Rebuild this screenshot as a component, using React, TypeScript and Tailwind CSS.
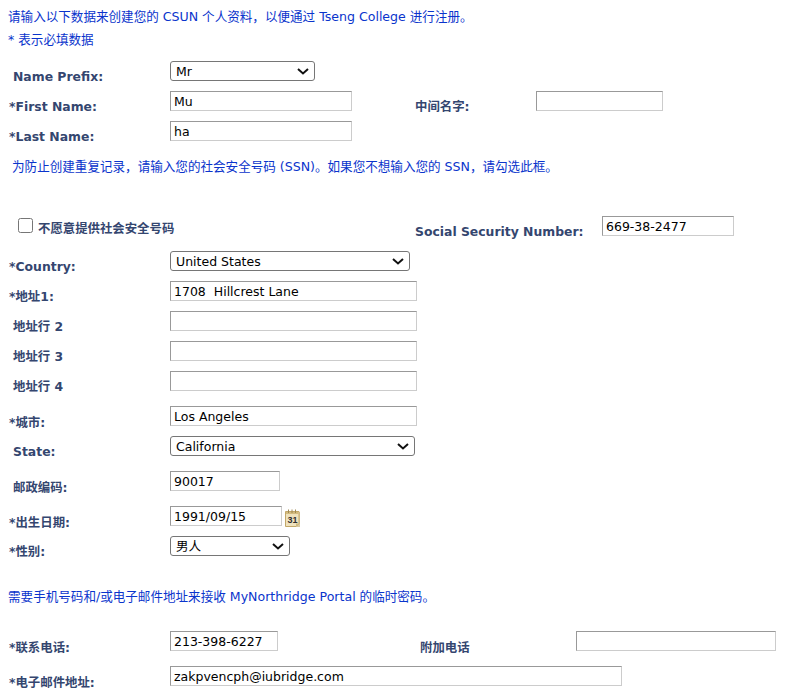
import React from 'react';

const inputCls =
  'h-[20px] shrink-0 border border-t-[#999] border-l-[#999] border-r-[#ccc] border-b-[#ccc] bg-white px-[3px] text-[12.5px] text-black outline-none';
const labelCls = 'shrink-0 font-bold text-[12.4px] leading-[16px] text-[#34466f]';
const noteCls = 'text-[12.57px] leading-[16px] text-[#0a34cc]';

// label column is 170px wide; required fields start a bit further left
const Label = ({ text, req, low }: { text: string; req?: boolean; low?: boolean }) => (
  <div className={`${labelCls} w-[170px] ${req ? 'pl-[9px]' : 'pl-[13px]'} ${low ? 'pt-[9px]' : 'pt-[8px]'}`}>
    {req ? '*' : ''}
    {text}
  </div>
);

const Select = ({ value, className }: { value: string; className: string }) => (
  <div className={`relative h-[20px] shrink-0 ${className}`}>
    <select
      className="block h-[20px] w-full appearance-none rounded-[3px] border border-[#767676] bg-white pl-[5px] pt-[1px] text-[12.5px] text-black"
      defaultValue={value}
    >
      <option>{value}</option>
    </select>
    <svg
      width="12"
      height="7"
      viewBox="0 0 12 7"
      className="pointer-events-none absolute right-[6px] top-[7px]"
    >
      <path d="M1 1l5 4.500 5-4.500" fill="none" stroke="#111" strokeWidth="2" />
    </svg>
  </div>
);

const CalendarIcon = () => (
  <svg width="17" height="19" viewBox="0 0 17 19" className="ml-[2px] mt-[3px] shrink-0">
    <path d="M2.500 3h13.500v15h-13.500z" fill="#d8c9a0" />
    <path d="M1.500 2.500h13.500v12l-3 3h-10.500z" fill="#efe2bd" stroke="#c2a768" />
    <path d="M2 3h12.500v2h-12.500z" fill="#d2ba7e" />
    <path d="M4.500 0.500v3.500M8 0.500v3.500M11.500 0.500v3.500" stroke="#a08a55" />
    <text x="3.500" y="14" fontSize="9" fontWeight="700" fill="#2f2f2f" fontFamily="'Liberation Sans',sans-serif">
      31
    </text>
    <path d="M12 17.500v-3h3z" fill="#d2ba7e" />
  </svg>
);

export default function App() {
  return (
    <form className="h-[694px] w-[785px] overflow-hidden bg-white font-['DejaVu_Sans','Noto_Sans_CJK_SC',sans-serif]">
      <p className={`${noteCls} pl-[8px] pt-[9px]`}>请输入以下数据来创建您的 CSUN 个人资料，以便通过 Tseng College 进行注册。</p>
      <p className={`${noteCls} pl-[8px] pt-[7px]`}>* 表示必填数据</p>

      <div className="mt-[13px] flex h-[20px]">
        <Label text="Name Prefix:" />
        <Select value="Mr" className="w-[145px]" />
      </div>

      <div className="mt-[10px] flex h-[20px]">
        <Label text="First Name:" req />
        <input className={`${inputCls} w-[182px]`} defaultValue="Mu" />
        <div className={`${labelCls} w-[184px] pl-[63px] pt-[8px]`}>中间名字:</div>
        <input className={`${inputCls} w-[127px]`} />
      </div>

      <div className="mt-[10px] flex h-[20px]">
        <Label text="Last Name:" req />
        <input className={`${inputCls} w-[182px]`} defaultValue="ha" />
      </div>

      <p className={`${noteCls} pl-[12px] pt-[18px]`}>为防止创建重复记录，请输入您的社会安全号码 (SSN)。如果您不想输入您的 SSN，请勾选此框。</p>

      <div className="mt-[41px] flex h-[20px]">
        <label className={`${labelCls} flex w-[415px] shrink-0 items-start pl-[18px] pt-[2px]`}>
          <input type="checkbox" className="mr-[5px] h-[15px] w-[15px]" />
          <span className="pt-[3px]">不愿意提供社会安全号码</span>
        </label>
        <div className={`${labelCls} w-[187px] pt-[8px]`}>Social Security Number:</div>
        <input className={`${inputCls} w-[132px]`} defaultValue="669-38-2477" />
      </div>

      <div className="mt-[15px] flex h-[20px]">
        <Label text="Country:" req />
        <Select value="United States" className="w-[240px]" />
      </div>

      <div className="mt-[10px] flex h-[20px]">
        <Label text="地址1:" req />
        <input className={`${inputCls} w-[247px]`} defaultValue="1708  Hillcrest Lane" />
      </div>
      <div className="mt-[10px] flex h-[20px]">
        <Label text="地址行 2" />
        <input className={`${inputCls} w-[247px]`} />
      </div>
      <div className="mt-[10px] flex h-[20px]">
        <Label text="地址行 3" />
        <input className={`${inputCls} w-[247px]`} />
      </div>
      <div className="mt-[10px] flex h-[20px]">
        <Label text="地址行 4" />
        <input className={`${inputCls} w-[247px]`} />
      </div>

      <div className="mt-[15px] flex h-[20px]">
        <Label text="城市:" req low />
        <input className={`${inputCls} w-[247px]`} defaultValue="Los Angeles" />
      </div>
      <div className="mt-[10px] flex h-[20px]">
        <Label text="State:" />
        <Select value="California" className="w-[245px]" />
      </div>
      <div className="mt-[15px] flex h-[20px]">
        <Label text="邮政编码:" low />
        <input className={`${inputCls} w-[110px]`} defaultValue="90017" />
      </div>
      <div className="mt-[15px] flex h-[20px]">
        <Label text="出生日期:" req low />
        <input className={`${inputCls} w-[112px]`} defaultValue="1991/09/15" />
        <CalendarIcon />
      </div>
      <div className="mt-[10px] flex h-[20px]">
        <Label text="性别:" req />
        <Select value="男人" className="w-[120px]" />
      </div>

      <p className={`${noteCls} pl-[8px] pt-[33px]`}>需要手机号码和/或电子邮件地址来接收 MyNorthridge Portal 的临时密码。</p>

      <div className="mt-[26px] flex h-[20px]">
        <Label text="联系电话:" req low />
        <input className={`${inputCls} w-[108px]`} defaultValue="213-398-6227" />
        <div className={`${labelCls} w-[298px] pl-[142px] pt-[9px]`}>附加电话</div>
        <input className={`${inputCls} w-[200px]`} />
      </div>
      <div className="mt-[15px] flex h-[20px]">
        <Label text="电子邮件地址:" req low />
        <input className={`${inputCls} w-[452px]`} defaultValue="zakpvencph@iubridge.com" />
      </div>
    </form>
  );
}
